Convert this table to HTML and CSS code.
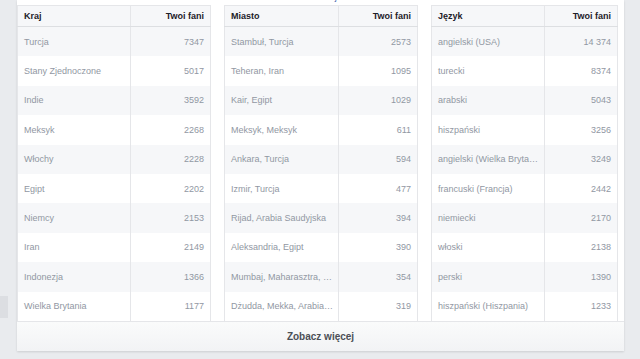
FILE: index.html
```html
<!DOCTYPE html>
<html lang="pl">
<head>
<meta charset="utf-8">
<link rel="stylesheet" href="styles.css">
</head>
<body>
<div class="page">
  <div class="side"><div class="side-block"></div></div>
  <div class="card">
    <div class="card-top"><span class="top-link">Dalej</span></div>
    <div class="tables">
      <table class="t t1">
        <colgroup><col class="c1"><col class="c2"></colgroup>
        <thead><tr><th>Kraj</th><th class="num">Twoi fani</th></tr></thead>
        <tbody>
          <tr><td>Turcja</td><td class="num">7347</td></tr>
          <tr><td>Stany Zjednoczone</td><td class="num">5017</td></tr>
          <tr><td>Indie</td><td class="num">3592</td></tr>
          <tr><td>Meksyk</td><td class="num">2268</td></tr>
          <tr><td>Włochy</td><td class="num">2228</td></tr>
          <tr><td>Egipt</td><td class="num">2202</td></tr>
          <tr><td>Niemcy</td><td class="num">2153</td></tr>
          <tr><td>Iran</td><td class="num">2149</td></tr>
          <tr><td>Indonezja</td><td class="num">1366</td></tr>
          <tr><td>Wielka Brytania</td><td class="num">1177</td></tr>
        </tbody>
      </table>
      <table class="t t2">
        <colgroup><col class="c1"><col class="c2"></colgroup>
        <thead><tr><th>Miasto</th><th class="num">Twoi fani</th></tr></thead>
        <tbody>
          <tr><td>Stambuł, Turcja</td><td class="num">2573</td></tr>
          <tr><td>Teheran, Iran</td><td class="num">1095</td></tr>
          <tr><td>Kair, Egipt</td><td class="num">1029</td></tr>
          <tr><td>Meksyk, Meksyk</td><td class="num">611</td></tr>
          <tr><td>Ankara, Turcja</td><td class="num">594</td></tr>
          <tr><td>Izmir, Turcja</td><td class="num">477</td></tr>
          <tr><td>Rijad, Arabia Saudyjska</td><td class="num">394</td></tr>
          <tr><td>Aleksandria, Egipt</td><td class="num">390</td></tr>
          <tr><td>Mumbaj, Maharasztra, Indie</td><td class="num">354</td></tr>
          <tr><td>Dżudda, Mekka, Arabia Saudyjska</td><td class="num">319</td></tr>
        </tbody>
      </table>
      <table class="t t3">
        <colgroup><col class="c1"><col class="c2"></colgroup>
        <thead><tr><th>Język</th><th class="num">Twoi fani</th></tr></thead>
        <tbody>
          <tr><td>angielski (USA)</td><td class="num">14 374</td></tr>
          <tr><td>turecki</td><td class="num">8374</td></tr>
          <tr><td>arabski</td><td class="num">5043</td></tr>
          <tr><td>hiszpański</td><td class="num">3256</td></tr>
          <tr><td>angielski (Wielka Brytania)</td><td class="num">3249</td></tr>
          <tr><td>francuski (Francja)</td><td class="num">2442</td></tr>
          <tr><td>niemiecki</td><td class="num">2170</td></tr>
          <tr><td>włoski</td><td class="num">2138</td></tr>
          <tr><td>perski</td><td class="num">1390</td></tr>
          <tr><td>hiszpański (Hiszpania)</td><td class="num">1233</td></tr>
        </tbody>
      </table>
    </div>
    <div class="footer">Zobacz więcej</div>
  </div>
</div>
</body>
</html>
```
FILE: styles.css
```css
html, body {
  margin: 0;
  padding: 0;
  background: #e9ebee;
  height: 359px;
  overflow: hidden;
  font-family: "Liberation Sans", Arial, sans-serif;
}
.page {
  display: flex;
  align-items: flex-start;
}
.side {
  width: 17px;
  flex: none;
}
.side-block {
  width: 8px;
  height: 22px;
  margin-top: 296px;
  background: #dcdee2;
}
.card {
  width: 607px;
  flex: none;
  background: #fff;
  box-shadow: 0 1px 2px rgba(0, 0, 0, 0.12);
}
.card-top {
  height: 5px;
  overflow: hidden;
  display: flex;
  justify-content: center;
  align-items: flex-end;
  padding-left: 12px;
}
.top-link {
  font-size: 9px;
  line-height: 9px;
  color: #4267b2;
  flex: none;
  margin-bottom: 3px;
}
.tables {
  display: flex;
  gap: 13px;
  padding-right: 6px;
}
.t {
  table-layout: fixed;
  border-collapse: collapse;
  border-left: 1px solid #e5e6e9;
  border-right: 1px solid #e5e6e9;
  font-size: 9px;
}
.t1 { width: 194px; }
.t2 { width: 194px; }
.t3 { width: 187px; }
.t1 .c1 { width: 113px; }
.t2 .c1 { width: 114px; }
.t3 .c1 { width: 113px; }
th, td {
  padding: 0 6px;
  text-align: left;
  white-space: nowrap;
  overflow: hidden;
  text-overflow: ellipsis;
}
td + td, th + th {
  border-left: 1px solid #e5e6e9;
}
th {
  height: 20px;
  font-weight: bold;
  color: #1d2129;
  background: #f6f7f9;
  border-top: 1px solid #e5e6e9;
  border-bottom: 1px solid #dddfe2;
}
td {
  height: 29.4px;
  color: #9197a3;
}
td:first-child {
  padding-right: 4px;
}
tbody tr:nth-child(odd) td {
  background: #f6f7f9;
}
.num {
  text-align: right;
}
.footer {
  height: 30px;
  border-top: 1px solid #e5e6e9;
  background: linear-gradient(#fafbfb, #f2f3f5);
  display: flex;
  align-items: center;
  justify-content: center;
  font-size: 10px;
  font-weight: bold;
  color: #4b4f56;
  box-sizing: border-box;
}
```
